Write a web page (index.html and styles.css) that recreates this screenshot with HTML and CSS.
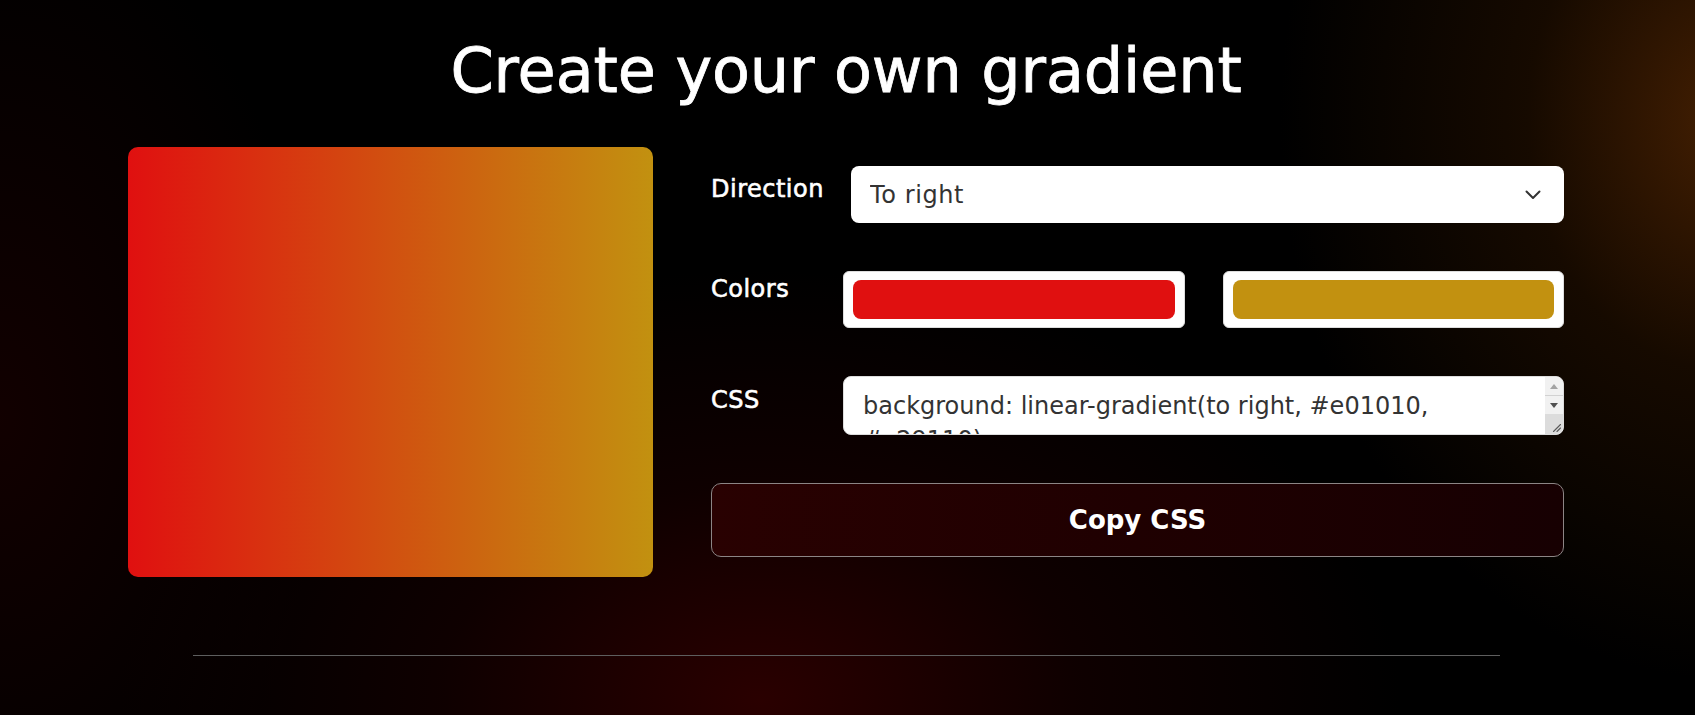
FILE: index.html
```html
<!DOCTYPE html>
<html lang="en">
<head>
<meta charset="utf-8">
<title>Create your own gradient</title>
<link rel="stylesheet" href="styles.css">
</head>
<body>
<section class="page">
  <h1 class="title">Create your own gradient</h1>
  <div class="maker">
    <div class="preview" style="background: linear-gradient(to right, #e01010, #c29110);"></div>
    <form class="controls">
      <label class="label label-direction" for="direction">Direction</label>
      <div class="select-wrap">
        <select id="direction" class="select">
          <option selected>To right</option>
          <option>To left</option>
          <option>To top</option>
          <option>To bottom</option>
        </select>
        <svg class="chevron" width="16" height="10" viewBox="0 0 16 10" aria-hidden="true"><path d="M1.5 1.5l6.5 6.5 6.5-6.5" fill="none" stroke="#333" stroke-width="2" stroke-linecap="round" stroke-linejoin="round"/></svg>
      </div>
      <span class="label label-colors">Colors</span>
      <div class="colors">
        <input type="color" class="color" value="#e01010" aria-label="First color">
        <input type="color" class="color" value="#c29110" aria-label="Second color">
      </div>
      <label class="label label-css" for="css">CSS</label>
      <div class="code-wrap">
        <textarea id="css" class="code">background: linear-gradient(to right, #e01010, #c29110);</textarea>
        <div class="scrollbar" aria-hidden="true">
          <span class="sb-btn sb-up"></span>
          <span class="sb-btn sb-down"></span>
          <span class="sb-resizer">
            <svg class="grip" width="9" height="9" viewBox="0 0 9 9"><path d="M8.5 1.5L1.5 8.5M8.5 5L5 8.5" stroke="#5a5a5a" stroke-width="1.1" stroke-linecap="round"/></svg>
          </span>
        </div>
      </div>
      <button type="button" class="copy">Copy CSS</button>
    </form>
  </div>
  <hr class="divider">
</section>
</body>
</html>
```
FILE: styles.css
```css
html, body {
  margin: 0;
  padding: 0;
}

body {
  min-height: 100vh;
  color: #fff;
  font-family: "DejaVu Sans", Inter, "Liberation Sans", sans-serif;
  background:
    radial-gradient(ellipse 450px 560px at 1730px 120px, rgba(68, 31, 2, 1) 0%, rgba(40, 18, 0, 0.55) 45%, rgba(0, 0, 0, 0) 100%),
    radial-gradient(ellipse 640px 430px at 760px 700px, rgba(42, 0, 0, 1) 0%, rgba(24, 0, 0, 0.6) 50%, rgba(0, 0, 0, 0) 100%),
    radial-gradient(ellipse 320px 520px at 0px 420px, rgba(22, 0, 0, 0.8) 0%, rgba(0, 0, 0, 0) 100%),
    #000;
}

.page {
  padding: 35px 3px 40px 0;
}

.title {
  margin: 0;
  text-align: center;
  font-size: 62px;
  line-height: 72px;
  font-weight: 400;
  letter-spacing: -0.1px;
  -webkit-text-stroke: 0.8px #fff;
}

.maker {
  display: flex;
  gap: 58px;
  width: 1436px;
  margin: 40px auto 0;
}

.preview {
  flex: none;
  width: 525px;
  height: 430px;
  border-radius: 10px;
}

.controls {
  flex: 1;
  display: grid;
  grid-template-columns: 132px 1fr;
  row-gap: 48px;
  align-content: start;
  padding-top: 19px;
  margin: 0;
}

.label {
  font-size: 24px;
  line-height: 28px;
  font-weight: 400;
  letter-spacing: 0.5px;
  -webkit-text-stroke: 0.6px #fff;
}

.label-direction { padding-top: 9px; }
.label-colors { padding-top: 4px; }
.label-css { padding-top: 10px; }

.select-wrap {
  position: relative;
  margin-left: 8px;
}

.select {
  display: block;
  width: 100%;
  height: 57px;
  box-sizing: border-box;
  padding: 0 19px;
  border: none;
  border-radius: 8px;
  background: #fff;
  color: #333;
  font-family: inherit;
  font-size: 24px;
  letter-spacing: 0.6px;
  -webkit-appearance: none;
  appearance: none;
  outline: none;
}

.chevron {
  position: absolute;
  right: 23px;
  top: 24px;
  pointer-events: none;
}

.colors {
  display: grid;
  grid-template-columns: 1fr 1fr;
  column-gap: 38px;
}

.color {
  display: block;
  width: 100%;
  height: 57px;
  box-sizing: border-box;
  margin: 0;
  padding: 0;
  border: 1px solid #ddd;
  border-radius: 6px;
  background: #fff;
  -webkit-appearance: none;
  appearance: none;
}

.color::-webkit-color-swatch-wrapper {
  padding: 8px 9px;
}

.color::-webkit-color-swatch {
  border: none;
  border-radius: 8px;
}

.code-wrap {
  position: relative;
}

.code {
  display: block;
  width: 100%;
  height: 59px;
  box-sizing: border-box;
  margin: 0;
  padding: 12px 36px 0 19px;
  border: 1px solid #ddd;
  border-radius: 8px;
  background: #fff;
  color: #333;
  font-family: inherit;
  font-size: 24px;
  line-height: 34px;
  resize: none;
  overflow: hidden;
  outline: none;
}

.scrollbar {
  position: absolute;
  top: 1px;
  right: 1px;
  bottom: 1px;
  width: 18px;
  display: flex;
  flex-direction: column;
  background: #f1f1f1;
  border-top-right-radius: 7px;
  border-bottom-right-radius: 7px;
  overflow: hidden;
}

.sb-btn {
  flex: none;
  height: 18px;
  display: flex;
  align-items: center;
  justify-content: center;
}

.sb-up {
  border-bottom: 1px solid #d2d2d2;
}

.sb-up::before {
  content: "";
  border-left: 4.5px solid transparent;
  border-right: 4.5px solid transparent;
  border-bottom: 5px solid #a3a3a3;
}

.sb-down::before {
  content: "";
  border-left: 4.5px solid transparent;
  border-right: 4.5px solid transparent;
  border-top: 5px solid #505050;
}

.sb-resizer {
  flex: 1;
  display: flex;
  align-items: flex-end;
  justify-content: flex-end;
  background: #dcdcdc;
  padding: 0 2px 2px 0;
}

.grip {
  display: block;
}

.copy {
  grid-column: 1 / -1;
  height: 74px;
  margin: 0;
  border: 1px solid #8c8585;
  border-radius: 10px;
  background: linear-gradient(90deg, #290101 0%, #1f0001 50%, #170002 100%);
  color: #fff;
  font-family: inherit;
  font-size: 26px;
  font-weight: 700;
  cursor: pointer;
}

.divider {
  width: 1307px;
  height: 1px;
  margin: 78px auto 0;
  border: none;
  background: #5e5e5e;
}
```
